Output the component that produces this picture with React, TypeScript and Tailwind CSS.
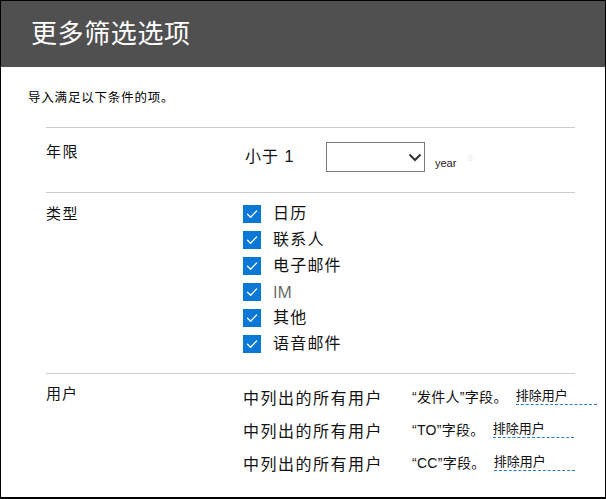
import React from 'react';

const cjk = "font-['Liberation_Sans','Noto_Sans_CJK_SC',sans-serif]";

const types = ['日历', '联系人', '电子邮件', 'IM', '其他', '语音邮件'];

const userRows = ['“发件人”字段。', '“TO”字段。', '“CC”字段。'];

function CheckBox() {
    return (
        <span className="flex h-[18px] w-[18px] shrink-0 items-center justify-center bg-[#0a78d6]">
            <svg width="18" height="18" viewBox="0 0 18 18" fill="none">
                <path d="M4.5 9.2 L7.6 12.2 L13.6 6" stroke="white" strokeWidth="1.3" strokeLinecap="round" strokeLinejoin="round" />
            </svg>
        </span>
    );
}

function App() {
    return (
        <div className={`flex h-[499px] w-[606px] flex-col overflow-hidden border-t border-l border-r border-b-2 border-black bg-white ${cjk} text-[#111]`}>
            <div className="flex h-[66px] shrink-0 items-center bg-[#505050] pl-[30px]">
                <h1 className="text-[26px] leading-none tracking-[0.6px] text-white">更多筛选选项</h1>
            </div>

            <p className="mt-[22px] ml-[27px] h-[18px] text-[12.5px] leading-[18px] tracking-[0.8px] text-black">
                导入满足以下条件的项。
            </p>

            <div className="mt-[20px] ml-[45px] mr-[30px]">
                {/* 年限 */}
                <div className="grid h-[65px] grid-cols-[197px_1fr] border-t border-[#cccccc]">
                    <div className="pt-[14px] text-[15px] leading-[20px] tracking-[1.5px]">年限</div>
                    <div className="flex items-center self-start pt-[14px]">
                        <span className="ml-[2px] w-[81px] text-[16px] leading-[30px] tracking-[1px]">
                            小于 <span className="font-['Liberation_Sans']">1</span>
                        </span>
                        <div className="flex h-[30px] w-[99px] items-center justify-end border border-[#7a7a7a] pr-[2px]">
                            <svg width="14" height="9" viewBox="0 0 14 9" fill="none">
                                <path d="M1.5 1.5 L7 7 L12.5 1.5" stroke="#333" strokeWidth="2" />
                            </svg>
                        </div>
                        <span className="ml-[10px] mb-[3px] self-end font-['Liberation_Sans'] text-[11px] leading-none text-[#222]">year</span>
                        <span className="ml-[11px] mb-[9px] self-end font-['Liberation_Sans'] text-[11px] leading-none text-[#ececec]">s</span>
                    </div>
                </div>

                {/* 类型 */}
                <div className="grid h-[181px] grid-cols-[197px_1fr] border-t border-[#cccccc]">
                    <div className="pt-[11px] text-[15px] leading-[20px] tracking-[1.5px]">类型</div>
                    <div className="flex flex-col pt-[8px]">
                        {types.map(t => (
                            <div key={t} className="flex h-[26px] items-center gap-[12px]">
                                <CheckBox />
                                <span
                                    className={
                                        t === 'IM'
                                            ? "font-['Open_Sans'] text-[16px] leading-none text-[#626262]"
                                            : 'text-[16px] leading-none tracking-[1.2px]'
                                    }
                                >
                                    {t}
                                </span>
                            </div>
                        ))}
                    </div>
                </div>

                {/* 用户 */}
                <div className="grid grid-cols-[197px_1fr] border-t border-[#cccccc]">
                    <div className="pt-[10px] text-[15px] leading-[20px] tracking-[1px]">用户</div>
                    <div className="flex flex-col pt-[8px]">
                        {userRows.map(r => (
                            <div key={r} className="flex h-[33px] items-center whitespace-nowrap">
                                <span className="w-[169px] shrink-0 text-[16px] leading-none tracking-[1.5px]">中列出的所有用户</span>
                                <span className="mb-[3px] shrink-0 text-[14px] leading-none tracking-[0.3px]">{r}</span>
                                <span className="ml-[8px] mb-[3px] inline-block w-[81px] shrink-0 border-b border-dashed border-[#2a7ad0] pb-[2px] text-[13px] leading-none">
                                    排除用户
                                </span>
                            </div>
                        ))}
                    </div>
                </div>
            </div>
        </div>
    );
}

export default App;
